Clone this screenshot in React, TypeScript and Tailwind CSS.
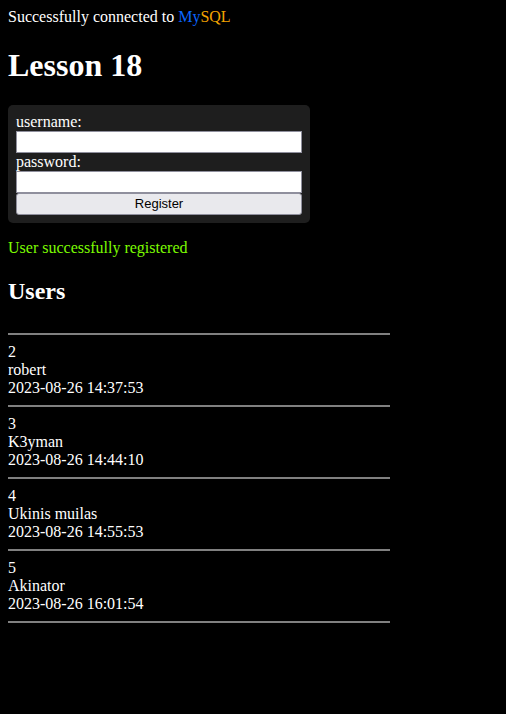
import React from 'react';

const users = [
  { id: 2, name: 'robert', created: '2023-08-26 14:37:53' },
  { id: 3, name: 'K3yman', created: '2023-08-26 14:44:10' },
  { id: 4, name: 'Ukinis muilas', created: '2023-08-26 14:55:53' },
  { id: 5, name: 'Akinator', created: '2023-08-26 16:01:54' },
];

export default function App() {
  return (
    <div className="min-h-[714px] bg-black p-2 text-white font-['Liberation_Serif',serif]">
      <div className="text-base leading-[18px]">
        Successfully connected to <span className="text-[#0a66ff]">My</span>
        <span className="text-[#f4a300]">SQL</span>
      </div>

      <h1 className="mt-[21px] mb-[21px] text-[32px] leading-[37px] font-bold">Lesson 18</h1>

      <form className="flex w-[302px] flex-col rounded-[5px] bg-[#1e1e1e] p-2" onSubmit={(e) => e.preventDefault()}>
        <label className="text-base leading-[18px]">username:</label>
        <input type="text" className="h-[22px] border border-[#8f8f9d] bg-white px-1 text-black outline-none" />
        <label className="text-base leading-[18px]">password:</label>
        <input type="password" className="h-[22px] border border-[#8f8f9d] bg-white px-1 text-black outline-none" />
        <button type="submit" className="h-[22px] rounded-[3px] border border-[#8f8f9d] bg-[#e9e9ed] text-[13px] text-black font-['Liberation_Sans',sans-serif]">
          Register
        </button>
      </form>

      <p className="mt-4 text-base leading-[18px] text-[#7cfc00]">User successfully registered</p>

      <h2 className="mt-5 mb-[28px] text-2xl leading-7 font-bold">Users</h2>

      <div className="w-[382px]">
        <hr className="border-t-2 border-[#808080]" />
        {users.map((u) => (
          <div key={u.id}>
            <div className="py-2">
              <div className="text-base leading-[18px]">{u.id}</div>
              <div className="text-base leading-[17px]">{u.name}</div>
              <div className="text-base leading-[19px]">{u.created}</div>
            </div>
            <hr className="border-t-2 border-[#808080]" />
          </div>
        ))}
      </div>
    </div>
  );
}
